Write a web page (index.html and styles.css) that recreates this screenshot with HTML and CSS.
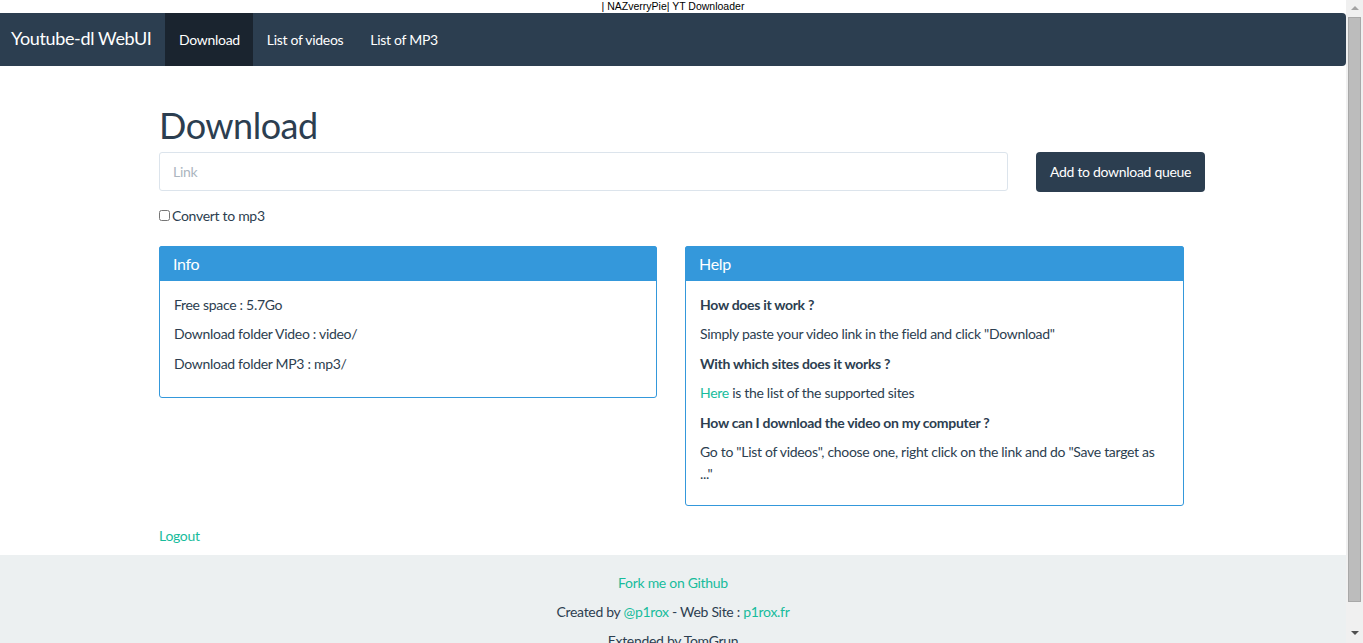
FILE: index.html
```html
<!DOCTYPE html>
<html lang="en">
<head>
<meta charset="utf-8">
<title>| NAZverryPie| YT Downloader</title>
<link rel="stylesheet" href="styles.css">
</head>
<body>
<div class="window">
  <div class="page">
    <div class="titlebar">| NAZverryPie| YT Downloader</div>
    <nav class="navbar">
      <a class="brand" href="#">Youtube-dl WebUI</a>
      <ul class="nav">
        <li><a class="nav-link active" href="#">Download</a></li>
        <li><a class="nav-link" href="#">List of videos</a></li>
        <li><a class="nav-link" href="#">List of MP3</a></li>
      </ul>
    </nav>
    <main class="container">
      <h1 class="page-title">Download</h1>
      <form class="dl-form">
        <input class="link-input" type="text" placeholder="Link">
        <button class="btn-primary" type="button">Add to download queue</button>
      </form>
      <label class="checkbox"><input type="checkbox" class="check"> Convert to mp3</label>
      <div class="panels">
        <section class="panel panel-info">
          <div class="panel-heading">Info</div>
          <div class="panel-body">
            <p>Free space : 5.7Go</p>
            <p>Download folder Video : video/</p>
            <p>Download folder MP3 : mp3/</p>
          </div>
        </section>
        <section class="panel panel-help">
          <div class="panel-heading">Help</div>
          <div class="panel-body">
            <p><b>How does it work ?</b></p>
            <p>Simply paste your video link in the field and click "Download"</p>
            <p><b>With which sites does it works ?</b></p>
            <p><a href="#">Here</a> is the list of the supported sites</p>
            <p><b>How can I download the video on my computer ?</b></p>
            <p>Go to "List of videos", choose one, right click on the link and do "Save target as ..."</p>
          </div>
        </section>
      </div>
      <p class="logout"><a href="#">Logout</a></p>
    </main>
    <footer class="footer">
      <p><a href="#">Fork me on Github</a></p>
      <p>Created by <a href="#">@p1rox</a> - Web Site : <a href="#">p1rox.fr</a></p>
      <p>Extended by TomGrun</p>
    </footer>
  </div>
  <div class="scrollbar">
    <div class="arrow arrow-up"></div>
    <div class="thumb"></div>
    <div class="arrow arrow-down"></div>
  </div>
</div>
</body>
</html>
```
FILE: styles.css
```css
html, body {
  margin: 0;
  padding: 0;
  height: 643px;
  overflow: hidden;
  background: #ffffff;
}
body {
  font-family: Lato, "Open Sans", "Liberation Sans", sans-serif;
  font-size: 14px;
  letter-spacing: -0.3px;
  line-height: 21.43px;
  color: #2c3e50;
}
a { color: #18bc9c; text-decoration: none; }
p { margin: 0 0 8px; }

.window {
  display: flex;
  height: 643px;
}
.page {
  flex: 1;
  min-width: 0;
  overflow: hidden;
}

.titlebar {
  height: 13px;
  font-family: "Liberation Sans", Arial, sans-serif;
  font-size: 10.5px;
  letter-spacing: 0;
  line-height: 13px;
  text-align: center;
  color: #000;
  background: #fff;
}

.navbar {
  height: 53px;
  background: #2c3e50;
  border-radius: 0 4px 4px 0;
  display: flex;
  align-items: stretch;
}
.brand {
  box-sizing: border-box;
  width: 165px;
  padding-left: 11px;
  display: flex;
  align-items: center;
  color: #fff;
  font-size: 18px;
  letter-spacing: -0.35px;
  padding-bottom: 1px;
}
.nav {
  list-style: none;
  margin: 0;
  padding: 0;
  display: flex;
}
.nav li { display: flex; }
.nav-link {
  display: flex;
  align-items: center;
  padding: 0 13px 0 14px;
  color: #fff;
  font-size: 14px;
}
.nav-link.active {
  background: #1a242f;
}

.container {
  padding: 0 0 0 159px;
  width: 1046px;
}
.page-title {
  font-size: 36px;
  font-weight: 400;
  letter-spacing: -0.5px;
  line-height: 42px;
  margin: 38px 0 0;
  color: #2c3e50;
}
.dl-form {
  display: flex;
  align-items: flex-start;
  margin: 6px 0 0;
  gap: 28px;
}
.link-input {
  box-sizing: border-box;
  width: 850px;
  height: 39px;
  border: 1px solid #dce4ec;
  border-radius: 3px;
  padding: 0 13px;
  font-family: Lato, sans-serif;
  font-size: 14px;
  letter-spacing: -0.3px;
  color: #2c3e50;
  outline: none;
}
.link-input::placeholder { color: #acb6c0; }
.btn-primary {
  box-sizing: border-box;
  width: 169px;
  height: 40px;
  border: 0;
  border-radius: 4px;
  background: #2c3e50;
  color: #fff;
  font-family: Lato, sans-serif;
  font-size: 14px;
  letter-spacing: -0.3px;
  white-space: nowrap;
  padding: 0 10px 1px;
}
.checkbox {
  display: flex;
  align-items: center;
  margin-top: 13px;
  height: 21px;
}
.check {
  width: 11px;
  height: 11px;
  margin: 0 2px 0 0;
}

.panels {
  display: grid;
  grid-template-columns: 498px 499px;
  column-gap: 28px;
  align-items: start;
  margin-top: 20px;
}
.panel {
  border: 1px solid #3498db;
  border-radius: 3px;
  background: #fff;
}
.panel-heading {
  height: 35px;
  margin-top: -1px;
  margin-left: -1px;
  margin-right: -1px;
  padding: 0 14px;
  display: flex;
  align-items: center;
  background: #3498db;
  color: #fff;
  font-size: 16px;
  border-radius: 3px 3px 0 0;
}
.panel-body {
  padding: 13px 14px 15px;
}
.panel-help .panel-body {
  padding-bottom: 13px;
}
.panel-body b { font-weight: 700; }

.logout {
  margin: 19px 0 8px;
}

.footer {
  background: #ecf0f1;
  text-align: center;
  padding-top: 17px;
  height: 200px;
}

.scrollbar {
  width: 17px;
  height: 643px;
  background: #f0f0f0;
  display: flex;
  flex-direction: column;
  align-items: center;
}
.arrow {
  width: 0;
  height: 0;
  border-left: 4px solid transparent;
  border-right: 4px solid transparent;
}
.arrow-up {
  border-bottom: 4px solid #a3a3a3;
  margin-top: 6px;
  margin-bottom: 7px;
}
.thumb {
  box-sizing: border-box;
  width: 13px;
  height: 585px;
  background: #bcbcbc;
  border: 1px solid #a8a8a8;
}
.arrow-down {
  border-top: 4px solid #505050;
  margin-top: 29px;
}
```
